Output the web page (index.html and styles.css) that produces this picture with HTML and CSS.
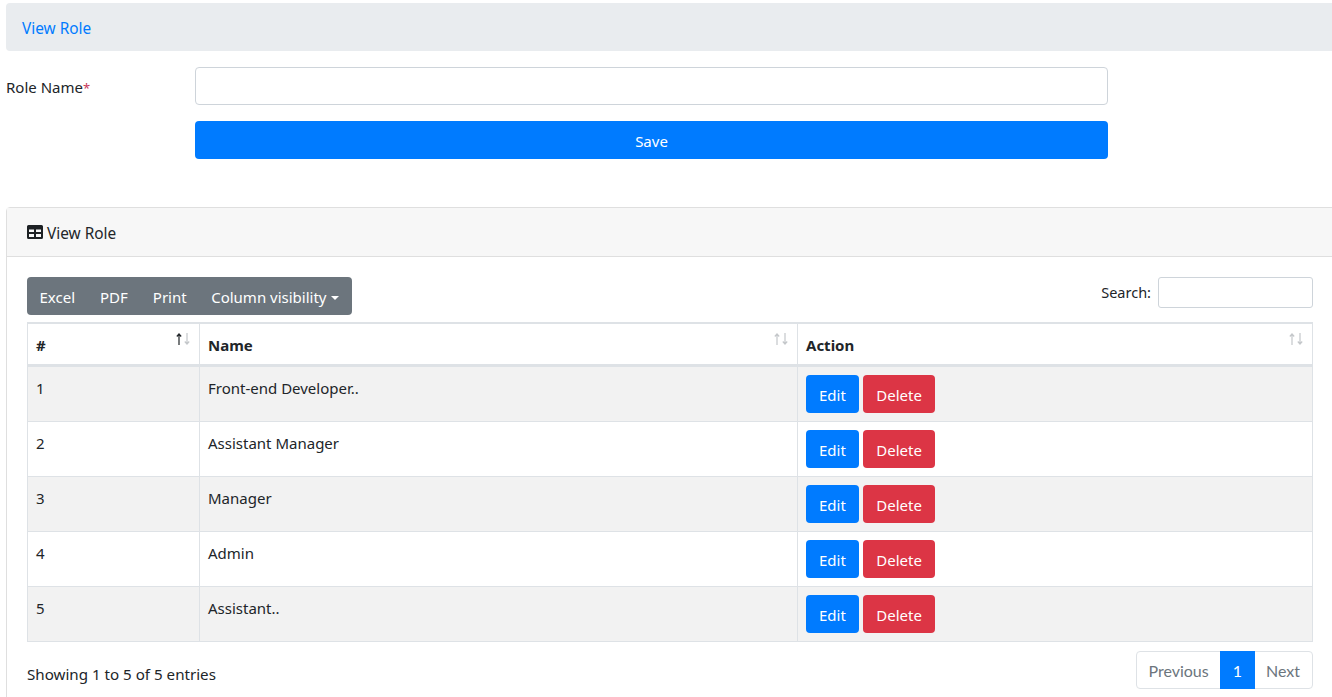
FILE: index.html
```html
<!DOCTYPE html>
<html lang="en">
<head>
    <meta charset="UTF-8">
    <meta name="viewport" content="width=device-width, initial-scale=1.0">
    <title>View Role</title>
    <link rel="stylesheet" href="styles.css">
</head>
<body>
    <div class="breadcrumb"><a href="#">View Role</a></div>

    <form class="role-form">
        <label class="form-label" for="role-name">Role Name<span class="required">*</span></label>
        <input class="form-control" id="role-name" type="text">
        <button class="btn btn-primary btn-save" type="button">Save</button>
    </form>

    <div class="card">
        <div class="card-header">
            <svg class="table-icon" viewBox="0 0 16 14" width="16" height="14" aria-hidden="true">
                <path fill-rule="evenodd" d="M1.500 0h13A1.500 1.500 0 0 1 16 1.500v11a1.500 1.500 0 0 1-1.500 1.500h-13A1.500 1.500 0 0 1 0 12.500v-11A1.500 1.500 0 0 1 1.500 0zM2 4.500v2.500h5V4.500zm7 0v2.500h5V4.500zM2 9v3h5V9zm7 0v3h5V9z"/>
            </svg>
            <span>View Role</span>
        </div>
        <div class="card-body">
            <div class="table-tools">
                <div class="btn-group">
                    <button type="button">Excel</button>
                    <button type="button">PDF</button>
                    <button type="button">Print</button>
                    <button type="button" class="dropdown-toggle">Column visibility</button>
                </div>
                <label class="search">Search: <input type="search"></label>
            </div>

            <table class="role-table">
                <colgroup>
                    <col class="col-num">
                    <col class="col-name">
                    <col>
                </colgroup>
                <thead>
                    <tr>
                        <th>#
                            <svg class="sort sort-up" viewBox="0 0 15 12" width="15" height="12" aria-hidden="true">
                                <path class="up" d="M3 12V1M.8 3.500 3 1l2.200 2.500"/>
                                <path class="down" d="M11 0v11M8.800 8.500 11 11l2.200-2.500"/>
                            </svg>
                        </th>
                        <th>Name
                            <svg class="sort" viewBox="0 0 15 12" width="15" height="12" aria-hidden="true">
                                <path class="up" d="M3 12V1M.8 3.500 3 1l2.200 2.500"/>
                                <path class="down" d="M11 0v11M8.800 8.500 11 11l2.200-2.500"/>
                            </svg>
                        </th>
                        <th>Action
                            <svg class="sort" viewBox="0 0 15 12" width="15" height="12" aria-hidden="true">
                                <path class="up" d="M3 12V1M.8 3.500 3 1l2.200 2.500"/>
                                <path class="down" d="M11 0v11M8.800 8.500 11 11l2.200-2.500"/>
                            </svg>
                        </th>
                    </tr>
                </thead>
                <tbody>
                    <tr>
                        <td>1</td>
                        <td>Front-end Developer..</td>
                        <td class="actions"><button class="btn btn-primary">Edit</button> <button class="btn btn-danger">Delete</button></td>
                    </tr>
                    <tr>
                        <td>2</td>
                        <td>Assistant Manager</td>
                        <td class="actions"><button class="btn btn-primary">Edit</button> <button class="btn btn-danger">Delete</button></td>
                    </tr>
                    <tr>
                        <td>3</td>
                        <td>Manager</td>
                        <td class="actions"><button class="btn btn-primary">Edit</button> <button class="btn btn-danger">Delete</button></td>
                    </tr>
                    <tr>
                        <td>4</td>
                        <td>Admin</td>
                        <td class="actions"><button class="btn btn-primary">Edit</button> <button class="btn btn-danger">Delete</button></td>
                    </tr>
                    <tr>
                        <td>5</td>
                        <td>Assistant..</td>
                        <td class="actions"><button class="btn btn-primary">Edit</button> <button class="btn btn-danger">Delete</button></td>
                    </tr>
                </tbody>
            </table>

            <div class="table-footer">
                <div class="table-info">Showing 1 to 5 of 5 entries</div>
                <div class="pagination">
                    <a href="#" class="prev">Previous</a>
                    <a href="#" class="active">1</a>
                    <a href="#" class="next">Next</a>
                </div>
            </div>
        </div>
    </div>
</body>
</html>
```

FILE: styles.css
```css
html, body {
    overflow: hidden;
}
body {
    font-family: "Noto Sans", "Open Sans", Arial, sans-serif;
    font-size: 15px;
    line-height: 24px;
    color: #212529;
    background-color: #fff;
    margin: 0;
    padding: 3px 0 0 6px;
    height: 694px;
}
a {
    text-decoration: none;
}
button {
    font-family: inherit;
}
.breadcrumb {
    background-color: #e9ecef;
    border-radius: 4px 0 0 4px;
    padding: 14px 16px 10px;
    margin-bottom: 16px;
    font-size: 15.400px;
}
.breadcrumb a {
    color: #007bff;
}
.role-form {
    display: grid;
    grid-template-columns: 189px 913px;
    row-gap: 16px;
}
.form-label {
    padding-top: 8px;
}
.required {
    color: #c8385a;
    font-size: 13px;
}
.form-control {
    height: 38px;
    box-sizing: border-box;
    border: 1px solid #ced4da;
    border-radius: 4px;
    padding: 6px 12px;
}
.btn {
    font-size: 15px;
    line-height: 24px;
    height: 38px;
    padding: 7px 12px 5px;
    border: 1px solid transparent;
    border-radius: 4px;
    color: #fff;
    cursor: pointer;
}
.btn-primary {
    background-color: #007bff;
}
.btn-danger {
    background-color: #dc3545;
    padding-left: 12.500px;
    padding-right: 12.500px;
}
.btn-save {
    grid-column: 2;
}
.card {
    margin-top: 48px;
    margin-right: -10px;
    border: 1px solid #dfdfdf;
    border-radius: 4px;
}
.card-header {
    display: flex;
    align-items: center;
    gap: 4px;
    height: 49px;
    box-sizing: border-box;
    padding: 0 20px;
    background-color: #f7f7f7;
    border-bottom: 1px solid #dfdfdf;
    font-size: 15.400px;
}
.card-header span {
    padding-top: 4px;
}
.table-icon {
    fill: #1d2124;
}
.card-body {
    padding: 20px 28px 20px 20px;
}
.table-tools {
    display: flex;
    justify-content: space-between;
    align-items: flex-start;
    margin-bottom: 7px;
}
.btn-group {
    display: flex;
    background-color: #6c757d;
    border-radius: 4px;
}
.btn-group button {
    height: 38px;
    padding: 2px 12.500px 0;
    border: none;
    background: none;
    color: #fff;
    font-size: 15px;
}
.btn-group .dropdown-toggle {
    padding-left: 12px;
    padding-right: 13px;
}
.dropdown-toggle::after {
    content: "";
    display: inline-block;
    margin-left: 4px;
    vertical-align: 3px;
    border-top: 4px solid #fff;
    border-left: 4px solid transparent;
    border-right: 4px solid transparent;
}
.search {
    display: flex;
    gap: 7px;
    align-items: flex-start;
    font-size: 14.500px;
    line-height: 30px;
}
.search input {
    width: 155px;
    height: 31px;
    box-sizing: border-box;
    border: 1px solid #ced4da;
    border-radius: 3px;
}
.role-table {
    width: 1286px;
    table-layout: fixed;
    border-collapse: collapse;
}
.col-num {
    width: 172px;
}
.col-name {
    width: 598px;
}
.role-table th, .role-table td {
    border: 1px solid #dee2e6;
    padding: 9px 8px 8px;
    text-align: left;
    vertical-align: top;
}
.role-table th {
    position: relative;
    height: 23px;
    padding-bottom: 7px;
    font-weight: 700;
    border-top-width: 2px;
    border-bottom-width: 3px;
}
.role-table td {
    height: 37px;
}
.role-table td.actions {
    padding-top: 8px;
}
.role-table tbody tr:nth-child(odd) {
    background-color: #f2f2f2;
}
.sort {
    position: absolute;
    top: 9px;
    right: 8px;
    fill: none;
    stroke: #c4c7ca;
    stroke-width: 1.200;
}
.sort-up .up {
    stroke: #212529;
}
.table-footer {
    display: flex;
    justify-content: space-between;
    align-items: flex-start;
    margin-top: 9px;
}
.table-info {
    padding-top: 11px;
    font-size: 15.150px;
}
.pagination {
    display: flex;
    font-family: Lato, sans-serif;
    font-size: 16px;
    height: 38px;
    box-sizing: border-box;
    border: 1px solid #dee2e6;
    border-radius: 4px;
}
.pagination a {
    padding: 7px 12px 5px;
    color: #6c757d;
}
.pagination a.prev {
    padding-left: 11px;
    padding-right: 11px;
}
.pagination a.next {
    padding-left: 11px;
}
.pagination a.active {
    background-color: #007bff;
    color: #fff;
    margin: -1px 0;
    padding: 8px 13px 6px;
}
```
